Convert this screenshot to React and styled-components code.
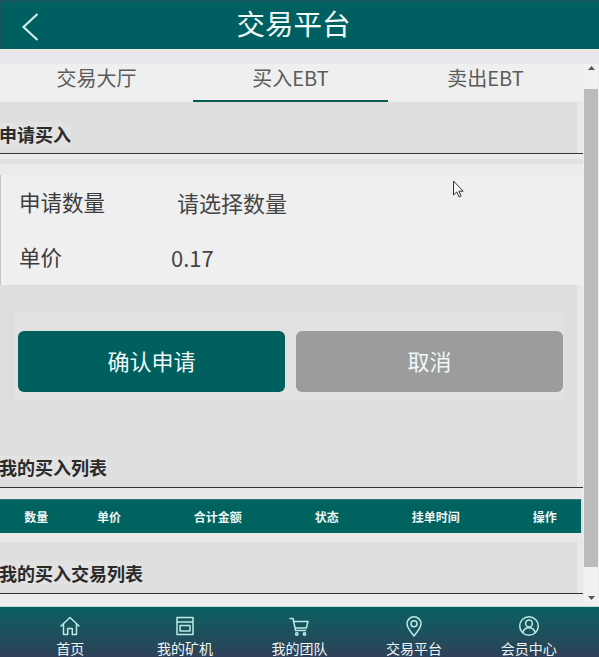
import React from "react";
import styled, { createGlobalStyle } from "styled-components";

const Global = createGlobalStyle`
  html, body { margin: 0; padding: 0; background: #f0f0f0; }
  #root { height: 657px; }
  * { box-sizing: border-box; }
`;
const Page = styled.div`
  position: relative;
  width: 599px; height: 657px; overflow: hidden;
  display: flex; flex-direction: column;
  font-family: "Noto Sans CJK SC", "Open Sans", sans-serif;
  background: #eeeeee;
`;
const Header = styled.header`
  flex: 0 0 49px; position: relative;
  display: flex; align-items: center; justify-content: center;
  background: linear-gradient(#1f5560 0, #005f60 3px);
  color: #f2fbfa; font-size: 28.5px; line-height: 1;
  padding: 0 13px 3px 0;
  border-left: 1px solid #1f5560;
`;
const Back = styled.svg`
  position: absolute; left: 20px; top: 13px;
  width: 19px; height: 28px;
  fill: none; stroke: #cdf0ec; stroke-width: 2.2;
`;
const Middle = styled.div`
  flex: 1; min-height: 0; display: flex;
`;
const Content = styled.main`
  width: 583px; display: flex; flex-direction: column;
  background: #dfdfdf;
`;
const TopGap = styled.div`
  flex: 0 0 15px;
  background: linear-gradient(#ece9e2 0, #ece9e2 3px, #e7e7ec 4px);
  margin-right: -16px;
`;
const Tabs = styled.nav`
  flex: 0 0 38px; display: grid;
  grid-template-columns: 193px 195px 1fr;
  background: #efefef;
`;
const Tab = styled.div`
  display: flex; align-items: center; justify-content: center;
  font-size: 20px; color: #5b5b5b; line-height: 1;
  padding-bottom: 8px;
  border-bottom: 2px solid ${p => (p.$active ? "#0b5b55" : "transparent")};
`;
const SectionHead = styled.div`
  height: ${p => p.$h}px; display: flex; align-items: flex-end;
  padding-bottom: ${p => p.$pb}px;
  border-bottom: 1px solid #333333;
  background: linear-gradient(to right, #dedede 577px, #e8e8e8 577px);
`;
const SectionTitle = styled.h3`
  margin: 0 0 0 -1px; font-size: 18px; font-weight: 700; line-height: 24px;
  color: #2a2a2a; background: #e2e2e2; white-space: nowrap;
`;
const Spacer = styled.div`
  height: ${p => p.$h}px; background: ${p => p.$bg};
`;
const Form = styled.section`
  height: 110px; background: #efefef; padding-top: 0;
  display: flex; flex-direction: column;
  box-shadow: inset 1px 0 #c4c4c4;
`;
const FormRow = styled.div`
  height: 56px; display: flex; align-items: center;
  font-size: 21.5px; line-height: 1; color: #3c3c3c;
  padding-left: ${p => p.$pl}px; padding-bottom: 2px;
`;
const FormLabel = styled.span`
  width: ${p => p.$w}px;
`;
const Value = styled.span`
  font-size: 22px; color: #444;
`;
const ActionArea = styled.div`
  height: 153px; padding-top: 27px;
  background: linear-gradient(to right, #dedede 577px, #e8e8e8 577px);
`;
const ActionBand = styled.div`
  height: 88px; padding: 19px 0 0 3px; margin: 0 19px 0 15px; background: #e2e2e2;
  display: grid; grid-template-columns: 267px 267px; column-gap: 11px;
`;
const Button = styled.div`
  height: 61px; border-radius: 6px;
  display: flex; align-items: center; justify-content: center;
  font-size: 22px; line-height: 1; padding-bottom: 4px;
  color: #eef8f7;
  background: ${p => p.$bg};
`;
const Table = styled.div`
  height: 34px; display: grid; margin-right: 2px;
  grid-template-columns: 1fr 1fr 2fr 1fr 2fr 1fr;
  background: #006360;
  border-top: 1px solid #2b7d78;
  box-shadow: 0 1px 1px #c9c2c6;
`;
const Th = styled.div`
  display: flex; align-items: center; justify-content: center;
  font-size: 12px; font-weight: 700; color: #edf7f5; line-height: 1;
`;
const Scrollbar = styled.aside`
  width: 14px; margin-left: 1px; margin-top: 15px; margin-bottom: 3px;
  display: flex; flex-direction: column; align-items: center;
  background: #f1f1f1;
  font-size: 0;
`;
const Arrow = styled.div`
  flex: 0 0 ${p => p.$h}px; width: 100%; padding-bottom: ${p => p.$pb || 0}px;
  display: flex; align-items: center; justify-content: center;
  color: #555;
`;
const Thumb = styled.div`
  flex: 0 0 478px; width: 100%; background: #bcbcbc;
`;
const Track = styled.div`
  flex: 1; width: 100%;
`;
const Footer = styled.footer`
  flex: 0 0 51px; display: grid; grid-template-columns: repeat(5, 1fr);
  padding: 0 13px;
  background: linear-gradient(#0a6060, #2e4159);
  border-top: 1px solid #bfd8d6;
`;
const FootItem = styled.div`
  display: flex; flex-direction: column; align-items: center;
  padding-top: 8px; color: #f0f6f6; font-size: 14px; line-height: 15px;
  white-space: nowrap;
`;
const FootIcon = styled.svg`
  width: 22px; height: 22px; margin-bottom: 4px; flex: none;
  fill: none; stroke: #bdeae5; stroke-width: 1.5;
  stroke-linecap: round; stroke-linejoin: round;
`;
const Cursor = styled.svg`
  position: absolute; left: 452px; top: 180px;
  width: 14px; height: 20px;
`;

const icons = [
  <path key="h" d="M2 11 11 2.500 20 11M4.500 9v10.500h4.200v-6h4.600v6h4.200V9" />,
  <g key="s"><path d="M3 2.500h16v17H3zM3 7h16" /><path d="M6 10.500h10v5.500H6z" /></g>,
  <g key="c"><path d="M2 3.500h3l2.600 12h10M5.600 6.500H20l-1.600 6.400H7" /><circle cx="8.800" cy="19" r="1.200" /><circle cx="16.500" cy="19" r="1.200" /></g>,
  <g key="m"><path d="M11 21C7 16 4 12.600 4 8.800a7 7 0 0 1 14 0C18 12.600 15 16 11 21z" /><circle cx="11" cy="8.800" r="3" /></g>,
  <g key="u"><circle cx="11" cy="11" r="9.300" /><circle cx="11" cy="8.500" r="3.400" /><path d="M4.800 17.500c.8-3 3-4.800 6.200-4.800s5.400 1.800 6.200 4.800" /></g>,
];
const nav = ["首页", "我的矿机", "我的团队", "交易平台", "会员中心"];
const cols = ["数量", "单价", "合计金额", "状态", "挂单时间", "操作"];

export default function App() {
  return (
    <Page>
      <Global />
      <Header>
        <Back viewBox="0 0 19 28"><path d="M16.500 1 2.500 14l14 13" /></Back>
        交易平台
      </Header>
      <Middle>
        <Content>
          <TopGap />
          <Tabs>
            <Tab>交易大厅</Tab>
            <Tab $active>买入EBT</Tab>
            <Tab>卖出EBT</Tab>
          </Tabs>
          <SectionHead $h={52} $pb={7}>
            <SectionTitle>申请买入</SectionTitle>
          </SectionHead>
          <Spacer $h={5} $bg="#ececec" />
          <Spacer $h={5} $bg="#e1e1e1" />
          <Spacer $h={11} $bg="#ebebeb" />
          <Form>
            <FormRow $pl={19}>
              <FormLabel $w={158}>申请数量</FormLabel>
              <Value>请选择数量</Value>
            </FormRow>
            <FormRow $pl={19}>
              <FormLabel $w={152}>单价</FormLabel>
              <Value>0.17</Value>
            </FormRow>
          </Form>
          <ActionArea>
            <ActionBand>
              <Button $bg="#005f5f">确认申请</Button>
              <Button $bg="#9c9c9c">取消</Button>
            </ActionBand>
          </ActionArea>
          <SectionHead $h={50} $pb={8}>
            <SectionTitle>我的买入列表</SectionTitle>
          </SectionHead>
          <Spacer $h={11} $bg="#e9e9e9" />
          <Table>
            {cols.map(c => <Th key={c}>{c}</Th>)}
          </Table>
          <Spacer $h={9} $bg="#e9e9e9" />
          <SectionHead $h={52} $pb={8}>
            <SectionTitle>我的买入交易列表</SectionTitle>
          </SectionHead>
          <Spacer $h={12} $bg="#ededee" />
        </Content>
        <Scrollbar>
          <Arrow $h={25} $pb={17}>
            <svg width="7" height="4" viewBox="0 0 7 4"><path d="M3.500 0 7 4H0z" fill="currentColor" /></svg>
          </Arrow>
          <Thumb />
          <Track />
          <Arrow $h={10}>
            <svg width="7" height="4" viewBox="0 0 7 4"><path d="M3.500 4 7 0H0z" fill="currentColor" /></svg>
          </Arrow>
        </Scrollbar>
      </Middle>
      <Footer>
        {nav.map((n, i) => (
          <FootItem key={n}>
            <FootIcon viewBox="0 0 22 22">{icons[i]}</FootIcon>
            {n}
          </FootItem>
        ))}
      </Footer>
      <Cursor viewBox="0 0 14 20">
        <path d="M1.500 1v14l3.300-3 2.300 5 2-1-2.200-4.800h4.300z" fill="#f4f4f4" stroke="#333" strokeWidth="1" />
      </Cursor>
    </Page>
  );
}
